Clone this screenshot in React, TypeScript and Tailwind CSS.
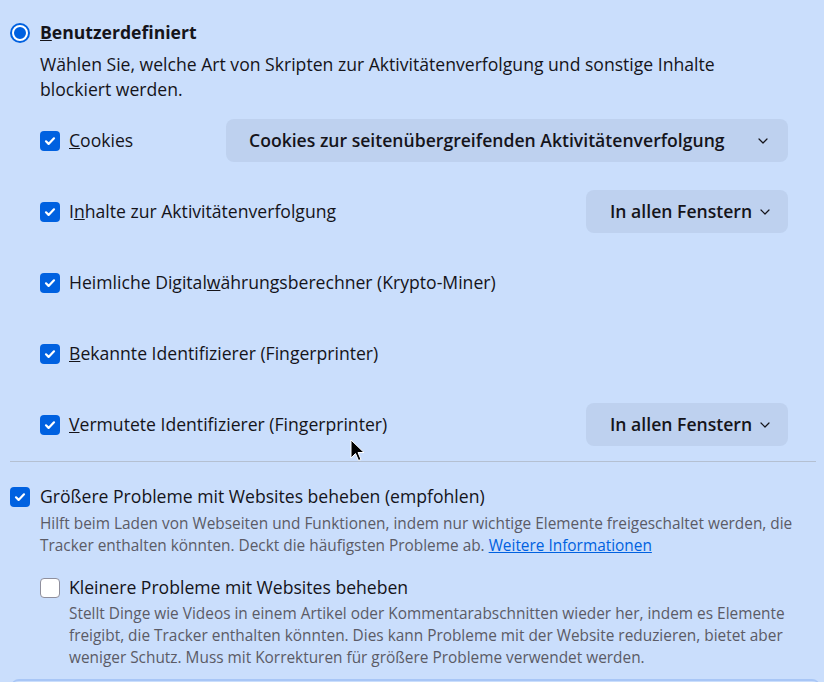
import React from "react";

function Chevron() {
  return (
    <svg width="10" height="6" viewBox="0 0 10 6" className="shrink-0">
      <path d="M1 1l4 4 4-4" fill="none" stroke="#15141a" strokeWidth="1.2" strokeLinecap="round" strokeLinejoin="round" />
    </svg>
  );
}

function Checkbox({ checked }: { checked: boolean }) {
  if (!checked) {
    return <div className="h-5 w-5 shrink-0 rounded-[4px] border border-[#8f8f9d] bg-white" />;
  }
  return (
    <div className="flex h-5 w-5 shrink-0 items-center justify-center rounded-[4px] bg-[#0061e0]">
      <svg width="14" height="14" viewBox="0 0 14 14">
        <path d="M3 7.3l2.6 2.6L11 4.3" fill="none" stroke="white" strokeWidth="2.2" strokeLinecap="round" strokeLinejoin="round" />
      </svg>
    </div>
  );
}

function Select({ label, wide }: { label: string; wide?: boolean }) {
  return (
    <button
      className={
        "flex h-[43px] items-center rounded-[8px] bg-[#bed1ef] font-semibold text-[#15141a] " +
        (wide ? "w-[562px] justify-between pl-[23px] pr-[20px]" : "w-[202px] gap-[8px] pl-[24px]")
      }
    >
      <span>{label}</span>
      <Chevron />
    </button>
  );
}

function Row({ children, select }: { children: React.ReactNode; select?: React.ReactNode }) {
  return (
    <div className="flex h-[43px] items-center justify-between">
      <div className="flex items-center gap-[9px]">
        <Checkbox checked />
        <span>{children}</span>
      </div>
      {select}
    </div>
  );
}

export default function App() {
  return (
    <div
      className="relative h-[682px] w-[824px] overflow-hidden bg-[#cadefc] text-[17.6px] leading-[25px] text-[#15141a]"
      style={{ fontFamily: '"Open Sans", "Noto Sans", sans-serif' }}
    >
      <div className="pl-[10px] pr-[8px] pt-[20px]">
        <div className="flex items-center gap-[10px]">
          <div className="h-5 w-5 rounded-full bg-[#0061e0] p-[2px]">
            <div className="h-full w-full rounded-full border-2 border-white bg-[#0061e0]" />
          </div>
          <span className="font-bold">
            <u>B</u>enutzerdefiniert
          </span>
        </div>

        <div className="pl-[30px] pr-[28px]">
          <p className="mt-[7px]">
            Wählen Sie, welche Art von Skripten zur Aktivitätenverfolgung und sonstige Inhalte blockiert werden.
          </p>

          <div className="mt-[17px] flex flex-col gap-[28px]">
            <Row select={<Select label="Cookies zur seitenübergreifenden Aktivitätenverfolgung" wide />}>
              <u>C</u>ookies
            </Row>
            <Row select={<Select label="In allen Fenstern" />}>
              I<u>n</u>halte zur Aktivitätenverfolgung
            </Row>
            <Row>
              Heimliche Digital<u>w</u>ährungsberechner (Krypto-Miner)
            </Row>
            <Row>
              <u>B</u>ekannte Identifizierer (Fingerprinter)
            </Row>
            <Row select={<Select label="In allen Fenstern" />}>
              <u>V</u>ermutete Identifizierer (Fingerprinter)
            </Row>
          </div>
        </div>

        <div className="mt-[15px] h-px bg-[#b4c0d2]" />

        <div className="mt-[22px] flex items-center gap-[10px]">
          <Checkbox checked />
          <span>Größere Probleme mit Websites beheben (empfohlen)</span>
        </div>
        <p className="mt-[4px] pl-[30px] pr-[20px] text-[15.4px] leading-[22px] text-[#5b5b66]">
          Hilft beim Laden von Webseiten und Funktionen, indem nur wichtige Elemente freigeschaltet werden, die
          Tracker enthalten könnten. Deckt die häufigsten Probleme ab.{" "}
          <a className="text-[#0061e0] underline">Weitere Informationen</a>
        </p>

        <div className="pl-[30px]">
          <div className="mt-[18px] flex items-center gap-[9px]">
            <Checkbox checked={false} />
            <span>Kleinere Probleme mit Websites beheben</span>
          </div>
          <p className="mt-[3px] pl-[29px] pr-[20px] text-[15.4px] leading-[22px] text-[#5b5b66]">
            Stellt Dinge wie Videos in einem Artikel oder Kommentarabschnitten wieder her, indem es Elemente
            freigibt, die Tracker enthalten könnten. Dies kann Probleme mit der Website reduzieren, bietet aber
            weniger Schutz. Muss mit Korrekturen für größere Probleme verwendet werden.
          </p>
        </div>
      </div>

      <div className="absolute bottom-[-8px] left-[11px] right-[4px] h-[11px] rounded-t-[8px] border-t-2 border-[#a8c6f6]" />

      <svg className="absolute left-[350px] top-[439px]" width="14" height="24" viewBox="0 0 14 24">
        <path d="M1 1v18l4.5-4.5 3 7 2.5-1-3-7h6z" fill="black" stroke="white" strokeWidth="1" />
      </svg>
    </div>
  );
}
